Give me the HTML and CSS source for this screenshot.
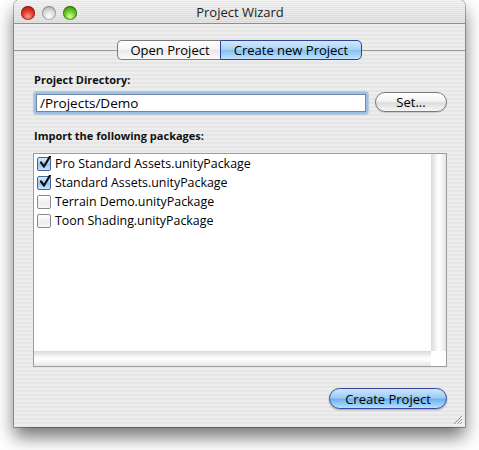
FILE: index.html
```html
<!DOCTYPE html>
<html>
<head>
<meta charset="utf-8">
<title>Project Wizard</title>
<link rel="stylesheet" href="styles.css">
</head>
<body>
<div class="window">
  <div class="titlebar">
    <div class="lights">
      <span class="light red"></span>
      <span class="light gray"></span>
      <span class="light green"></span>
    </div>
    <div class="title">Project Wizard</div>
  </div>
  <div class="content">
    <div class="tabbar">
      <span class="tabline"></span>
      <div class="segmented">
        <span class="seg seg-left">Open Project</span>
        <span class="seg seg-right">Create new Project</span>
      </div>
      <span class="tabline"></span>
    </div>

    <div class="label label-dir">Project Directory:</div>
    <div class="dirrow">
      <div class="focusring"><div class="field">/Projects/Demo</div></div>
      <div class="btn btn-set">Set...</div>
    </div>

    <div class="label label-import">Import the following packages:</div>
    <div class="listbox">
      <div class="listmain">
        <div class="rows">
          <div class="row"><span class="check checked"><svg viewBox="0 0 14 14" width="14" height="14"><path d="M3 6.5 L6 10.5 L12 0.5" fill="none" stroke="#111" stroke-width="2.2" stroke-linecap="round" stroke-linejoin="round"/></svg></span><span class="rowtext">Pro Standard Assets.unityPackage</span></div>
          <div class="row"><span class="check checked"><svg viewBox="0 0 14 14" width="14" height="14"><path d="M3 6.5 L6 10.5 L12 0.5" fill="none" stroke="#111" stroke-width="2.2" stroke-linecap="round" stroke-linejoin="round"/></svg></span><span class="rowtext">Standard Assets.unityPackage</span></div>
          <div class="row"><span class="check"></span><span class="rowtext">Terrain Demo.unityPackage</span></div>
          <div class="row"><span class="check"></span><span class="rowtext">Toon Shading.unityPackage</span></div>
        </div>
        <div class="vscroll"></div>
      </div>
      <div class="hrow">
        <div class="hscroll"></div>
        <div class="corner"></div>
      </div>
    </div>

    <div class="footer">
      <div class="btn btn-create">Create Project</div>
    </div>
  </div>
  <svg class="grip" width="10" height="10" viewBox="0 0 10 10"><path d="M9 1 L1 9 M9 4 L4 9 M9 7 L7 9" stroke="#8a8a8a" stroke-width="1"/><path d="M10 2 L2 10 M10 5 L5 10 M10 8 L8 10" stroke="#fff" stroke-width="1"/></svg>
</div>
</body>
</html>
```
FILE: styles.css
```css
* { box-sizing: border-box; }
html, body { margin: 0; padding: 0; background: #fff; }
body {
  font-family: "Open Sans", "DejaVu Sans", sans-serif;
  color: #000;
  width: 479px;
  height: 450px;
  overflow: hidden;
}
.window {
  position: relative;
  margin-left: 14px;
  width: 451px;
  height: 427px;
  border-radius: 6px 6px 0 0;
  background: repeating-linear-gradient(to bottom, #ededed 0 2px, #e6e6e6 2px 4px);
  box-shadow: 0 0 0 1px rgba(0,0,0,0.28), 0 10px 18px rgba(0,0,0,0.55);
  display: flex;
  flex-direction: column;
}
.titlebar {
  position: relative;
  height: 24px;
  border-bottom: 1px solid #8e8e8e;
  border-radius: 6px 6px 0 0;
  background:
    repeating-linear-gradient(to bottom, rgba(255,255,255,0.25) 0 1px, rgba(0,0,0,0.02) 1px 2px),
    linear-gradient(to bottom, #efefef, #dcdcdc);
  display: flex;
  align-items: center;
  justify-content: center;
}
.lights {
  position: absolute;
  left: 7px;
  top: 6px;
  display: flex;
  gap: 7px;
}
.light {
  width: 14px;
  height: 14px;
  border-radius: 50%;
  display: block;
}
.red {
  background: radial-gradient(circle at 50% 75%, #ff9a8c 0, #e0392c 45%, #a5140c 100%);
  box-shadow: inset 0 0 0 1px rgba(110,0,0,0.45);
}
.gray {
  background: radial-gradient(circle at 50% 75%, #ffffff 0, #d8d8d8 50%, #9c9c9c 100%);
  box-shadow: inset 0 0 0 1px rgba(0,0,0,0.25);
}
.green {
  background: radial-gradient(circle at 50% 75%, #d6ff9c 0, #6cc624 45%, #2f7d08 100%);
  box-shadow: inset 0 0 0 1px rgba(0,60,0,0.45);
}
.title {
  font-size: 13px;
  line-height: 16px;
  color: #222;
  margin-left: 1px;
  margin-top: 1px;
}
.content {
  flex: 1;
  display: flex;
  flex-direction: column;
  padding: 16px 18px 0 19px;
}
.tabbar {
  display: flex;
  align-items: center;
  margin: 0 -18px 0 -19px;
  height: 20px;
}
.tabline {
  flex: 1;
  height: 1px;
  background: #9a9a9a;
}
.segmented {
  display: flex;
  height: 20px;
}
.seg {
  display: flex;
  align-items: center;
  justify-content: center;
  font-size: 13px;
  height: 20px;
  line-height: 18px;
}
.seg-left {
  width: 103px;
  border: 1px solid #7d7d7d;
  border-right: none;
  border-radius: 5px 0 0 5px;
  background: linear-gradient(to bottom, #ffffff 0%, #f4f4f4 50%, #e8e8e8 51%, #fbfbfb 100%);
  padding-left: 2px;
}
.seg-right {
  width: 142px;
  border: 1px solid #2f4490;
  border-radius: 0 5px 5px 0;
  background: linear-gradient(to bottom, #d3e8fb 0%, #a8d2f6 48%, #86bff0 52%, #bfe3ff 100%);
}
.label {
  font-size: 11px;
  font-weight: bold;
  line-height: 15px;
  color: #111;
  padding-left: 1px;
}
.label-dir { margin-top: 12px; }
.dirrow {
  margin-top: 5px;
  display: flex;
  align-items: flex-start;
  height: 22px;
}
.focusring {
  width: 334px;
  height: 22px;
  margin-left: 1px;
  padding: 2px;
  border-radius: 3px;
  background: #9fc0e6;
  box-shadow: 0 0 1px 1px rgba(130,170,220,0.5);
}
.field {
  height: 18px;
  background: #fff;
  border: 1px solid #6f86a6;
  font-size: 13.5px;
  line-height: 16px;
  padding-left: 3px;
}
.btn {
  display: flex;
  align-items: center;
  justify-content: center;
  font-size: 13px;
  border-radius: 11px;
}
.btn-set {
  margin-left: 7px;
  width: 72px;
  height: 20px;
  border: 1px solid #7a7a7a;
  background: linear-gradient(to bottom, #ffffff 0%, #f3f3f3 45%, #dcdcdc 55%, #f6f6f6 100%);
  box-shadow: 0 1px 1px rgba(0,0,0,0.15);
}
.label-import { margin-top: 14px; }
.listbox {
  margin-top: 10px;
  height: 214px;
  border: 1px solid #9c9c9c;
  background: #fff;
  display: flex;
  flex-direction: column;
}
.listmain {
  flex: 1;
  display: flex;
}
.rows {
  flex: 1;
  padding: 0 0 0 3px;
}
.row {
  height: 19px;
  display: flex;
  align-items: center;
}
.check {
  width: 14px;
  height: 14px;
  border: 1px solid #8a8a8a;
  border-radius: 2px;
  background: linear-gradient(to bottom, #ffffff, #ececec 60%, #f8f8f8);
  display: block;
  position: relative;
  overflow: visible;
}
.check.checked {
  border-color: #49639a;
  background: linear-gradient(to bottom, #d8ecfc, #99c8f2 55%, #c4e3fd);
}
.check svg {
  position: absolute;
  left: 0;
  top: -2px;
}
.rowtext {
  font-size: 12.4px;
  margin-left: 4px;
  line-height: 16px;
}
.vscroll {
  width: 15px;
  background: linear-gradient(to right, #d9d9d9 0%, #f6f6f6 35%, #ffffff 55%, #e6e6e6 100%);
}
.hrow {
  height: 15px;
  display: flex;
}
.hscroll {
  flex: 1;
  background: linear-gradient(to bottom, #d9d9d9 0%, #f6f6f6 35%, #ffffff 55%, #e6e6e6 100%);
}
.corner {
  width: 15px;
  background: #fff;
}
.footer {
  margin-top: 21px;
  display: flex;
  justify-content: flex-end;
}
.btn-create {
  width: 118px;
  height: 21px;
  border: 1px solid #34479a;
  background: linear-gradient(to bottom, #cfe6fb 0%, #9dcbf4 45%, #6fb1ee 55%, #b6e2ff 100%);
  box-shadow: 0 1px 2px rgba(0,0,0,0.3);
}
.grip {
  position: absolute;
  right: 2px;
  bottom: 2px;
}
```
